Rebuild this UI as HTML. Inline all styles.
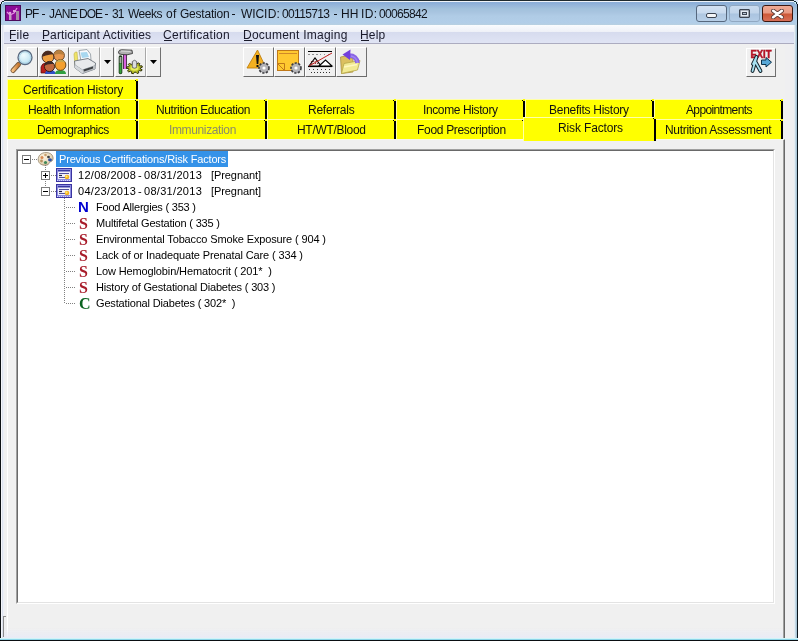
<!DOCTYPE html>
<html><head><meta charset="utf-8">
<style>
*{margin:0;padding:0;box-sizing:border-box}
html,body{width:798px;height:641px;overflow:hidden;background:#f0f0f0;font-family:"Liberation Sans",sans-serif}
.a{will-change:transform}
.a{position:absolute}
#title{left:0;top:0;width:798px;height:25px;background:linear-gradient(#88acd6 0px,#8cafd8 3px,#98b8da 6px,#a2c2dc 9px,#a8c4e0 12px,#b0cce6 16px,#b2cee8 23px,#b8d0e0 25px)}
.tt2{top:7px;font-size:12px;color:#10141c;white-space:nowrap}
#menu{left:0;top:25px;width:798px;height:19px;background:linear-gradient(#fafcfe 0px,#eef0f7 7px,#d6dbee 7px,#e0e4f4 18px);border-bottom:1px solid #acacc0}
.mi{top:28px;font-size:12px;color:#1a1a2a;white-space:nowrap}
.ul{top:40px;height:1px;background:#1a1a2a}
.tb{background:#f0f0f0;border-top:1px solid #fff;border-left:1px solid #fff;border-right:1px solid #707070;border-bottom:1px solid #6a6a6a}
.tab{background:#ffff00;font-size:12px;color:#111;text-align:center;white-space:nowrap;letter-spacing:-0.3px}
.tab .r{position:absolute;right:0;top:2px;bottom:0;width:2px;background:#000}
.tab .r:before{content:"";position:absolute;left:-1px;top:-1px;width:1px;height:1px;background:#000}
.tab .l{position:absolute;left:0;top:0;bottom:0;width:1px;background:#ffffa8}
.tab .t{position:absolute;left:0;right:2px;top:0;height:1px;background:#ffffa8}
.tt{font-size:12px;color:#111;white-space:nowrap;line-height:normal}
.tr{font-size:11px;color:#000;white-space:nowrap;letter-spacing:-0.2px}
.ic{font-family:"Liberation Serif",serif;font-weight:bold;font-size:16px;line-height:16px}
</style></head><body>

<!-- window frame -->
<div class="a" style="left:0;top:0;width:798px;height:641px;background:#f0f0f0"></div>
<div class="a" id="title"></div>
<div class="a" style="left:0;top:0;width:798px;height:1px;background:#1e2a2e"></div>
<div class="a" style="left:1px;top:1px;width:796px;height:1px;background:#eef3f8"></div>
<!-- title icon -->
<svg class="a" style="left:5px;top:5px" width="16" height="16" viewBox="0 0 16 16">
<rect x="0.5" y="0.5" width="15" height="15" fill="#8a0a96" stroke="#4a0a5a"/>
<rect x="11" y="6" width="3" height="9" fill="#a88aa8"/>
<circle cx="5" cy="8" r="1.3" fill="#e0a0e0"/>
<path d="M2 7 L5 10 L9 8 L12 3" stroke="#e090e0" stroke-width="1.3" fill="none"/>
<rect x="4" y="10" width="2.5" height="5" fill="#c0a0c0"/>
<rect x="8" y="5" width="3" height="2" fill="#e0a0e0"/>
</svg>
<div class="a tt2" style="left:25.0px;letter-spacing:-1.0px">PF</div>
<div class="a tt2" style="left:48.8px;letter-spacing:-0.6px">JANE</div>
<div class="a tt2" style="left:79.4px;letter-spacing:-1.0px">DOE</div>
<div class="a tt2" style="left:112.1px;letter-spacing:-1.0px">31</div>
<div class="a tt2" style="left:128.3px;letter-spacing:-0.5px">Weeks</div>
<div class="a tt2" style="left:165.5px;letter-spacing:0.4px">of</div>
<div class="a tt2" style="left:180.0px;letter-spacing:-0.225px">Gestation</div>
<div class="a tt2" style="left:240.6px;letter-spacing:-0.1px">WIC</div>
<div class="a tt2" style="left:264.4px;letter-spacing:0.3px">ID:</div>
<div class="a tt2" style="left:282.4px;letter-spacing:-0.657px">00115713</div>
<div class="a tt2" style="left:340.9px;letter-spacing:0.2px">HH</div>
<div class="a tt2" style="left:361.0px;letter-spacing:0.4px">ID:</div>
<div class="a tt2" style="left:378.6px;letter-spacing:-0.686px">00065842</div>
<div class="a" style="left:41.5px;top:14px;width:3.4px;height:1px;background:#10141c"></div>
<div class="a" style="left:105.4px;top:14px;width:3.4px;height:1px;background:#10141c"></div>
<div class="a" style="left:232.4px;top:14px;width:3.4px;height:1px;background:#10141c"></div>
<div class="a" style="left:334.1px;top:14px;width:3.4px;height:1px;background:#10141c"></div>

<!-- caption buttons -->
<div class="a" style="left:696px;top:5px;width:31px;height:17px;border:1px solid #56687e;border-radius:3px;background:linear-gradient(#d4e2f2 0,#c8daee 7px,#aec6e0 8px,#b8d0e8 15px)"></div>
<div class="a" style="left:706px;top:13px;width:11px;height:5px;border:1px solid #3c4450;background:#f4f6f8;border-radius:2px"></div>
<div class="a" style="left:729px;top:5px;width:31px;height:17px;border:1px solid #90a8c2;border-radius:3px;background:linear-gradient(#cadbee 0,#c0d4ea 7px,#aac4e0 8px,#b4cce6 15px)"></div>
<div class="a" style="left:739px;top:9px;width:11px;height:9px;border:1px solid #3c4450;border-radius:1px;background:#e4eaf2;box-shadow:inset 0 0 0 0.6px #6c7480"></div>
<div class="a" style="left:742px;top:12px;width:5px;height:3px;border:1px solid #3c4450;background:#b8c4d4"></div>
<div class="a" style="left:762px;top:5px;width:31px;height:17px;border:1px solid #3c1810;border-radius:3px;background:linear-gradient(#eeaa94 0,#e89a84 7px,#cc5838 8px,#d87058 15px)"></div>
<svg class="a" style="left:771px;top:9px" width="13" height="10" viewBox="0 0 13 10"><path d="M2.2 1.8 L10.8 8.2 M10.8 1.8 L2.2 8.2" stroke="#5a3a36" stroke-width="4.2" stroke-linecap="round"/><path d="M2.2 1.8 L10.8 8.2 M10.8 1.8 L2.2 8.2" stroke="#fff" stroke-width="2.6" stroke-linecap="round"/></svg>

<!-- menu -->
<div class="a" id="menu"></div>
<div class="a mi" style="left:9px;letter-spacing:0.267px">File</div>
<div class="a mi" style="left:41.6px;letter-spacing:0.114px">Participant Activities</div>
<div class="a mi" style="left:163px;letter-spacing:0.283px">Certification</div>
<div class="a mi" style="left:242.8px;letter-spacing:0.24px">Document Imaging</div>
<div class="a mi" style="left:359.9px;letter-spacing:0.2px">Help</div>
<div class="a ul" style="left:10px;width:6px"></div>
<div class="a ul" style="left:42px;width:7px"></div>
<div class="a ul" style="left:164px;width:8px"></div>
<div class="a ul" style="left:244px;width:8px"></div>
<div class="a ul" style="left:361px;width:8px"></div>

<!-- client background -->
<div class="a" style="left:2px;top:44px;width:795px;height:594px;background:#f0f0f0"></div>

<!-- toolbar buttons -->
<div class="a tb" style="left:7px;top:47px;width:31px;height:30px"></div>
<div class="a tb" style="left:38px;top:47px;width:31px;height:30px"></div>
<div class="a tb" style="left:69px;top:47px;width:31px;height:30px;border-right-color:#a8a8a8"></div>
<div class="a tb" style="left:100px;top:47px;width:14px;height:30px"></div>
<div class="a tb" style="left:115px;top:47px;width:31px;height:30px;border-right-color:#a8a8a8"></div>
<div class="a tb" style="left:146px;top:47px;width:15px;height:30px"></div>
<div class="a tb" style="left:243px;top:47px;width:31px;height:30px"></div>
<div class="a tb" style="left:274px;top:47px;width:31px;height:30px"></div>
<div class="a tb" style="left:305px;top:47px;width:31px;height:30px"></div>
<div class="a tb" style="left:336px;top:47px;width:31px;height:30px"></div>
<div class="a tb" style="left:746px;top:48px;width:30px;height:29px"></div>


<!-- toolbar icons -->
<svg class="a" style="left:7px;top:46px" width="31" height="30" viewBox="0 0 31 30">
<defs><linearGradient id="hg" x1="0" y1="0" x2="1" y2="0"><stop offset="0" stop-color="#f8c080"/><stop offset="1" stop-color="#c87830"/></linearGradient>
<radialGradient id="lg" cx="0.4" cy="0.35" r="0.7"><stop offset="0" stop-color="#f0fcff"/><stop offset="1" stop-color="#b8e0f0"/></radialGradient></defs>
<path d="M6 24.5 L11.5 18.5" stroke="#7a5a3a" stroke-width="5" stroke-linecap="round"/>
<path d="M6 24.5 L11.5 18.5" stroke="url(#hg)" stroke-width="3.2" stroke-linecap="round"/>
<circle cx="18" cy="11.5" r="7" fill="url(#lg)" stroke="#5a6a80" stroke-width="1.3"/>
<circle cx="18" cy="11.5" r="5.6" fill="none" stroke="#a8d0e4" stroke-width="0.8"/>
</svg>
<svg class="a" style="left:38px;top:46px" width="31" height="30" viewBox="0 0 31 30">
<defs>
<clipPath id="h1"><path d="M0 0 H31 V9.5 Q10 6 0 13Z"/></clipPath>
<clipPath id="h2"><path d="M0 0 H31 V11 Q21 5.5 14 10Z"/></clipPath>
<clipPath id="h3"><path d="M0 0 H31 V19 Q11 15.5 4 21Z"/></clipPath>
<clipPath id="h4"><path d="M0 0 H31 V17.5 Q22 14 16 18Z"/></clipPath>
</defs>
<path d="M3 27 L3 21 Q4 17 8 17 L10 27Z" fill="#b81c1c" stroke="#500c0c" stroke-width="0.7"/>
<circle cx="21" cy="9.5" r="5.4" fill="#e89850" stroke="#5a3a20" stroke-width="0.9"/>
<circle cx="21" cy="9.5" r="5.4" fill="#b88040" clip-path="url(#h2)"/>
<circle cx="10" cy="11" r="5.9" fill="#f0a040" stroke="#3a2018" stroke-width="0.9"/>
<circle cx="10" cy="11" r="5.9" fill="#4a2a20" clip-path="url(#h1)"/>
<path d="M7 28 Q7 24 12 24 Q17 24 18 28Z" fill="#3050c8"/>
<path d="M17 28 Q17 24 22.5 24 Q28 24 28 28Z" fill="#30a040"/>
<circle cx="11.5" cy="20.5" r="5.1" fill="#c06840" stroke="#301810" stroke-width="0.9"/>
<circle cx="11.5" cy="20.5" r="5.1" fill="#3c2828" clip-path="url(#h3)"/>
<circle cx="22.5" cy="19" r="5.4" fill="#f4a030" stroke="#5a3a10" stroke-width="0.9"/>
<circle cx="22.5" cy="19" r="5.4" fill="#c8a850" clip-path="url(#h4)"/>
</svg>
<svg class="a" style="left:69px;top:46px" width="31" height="30" viewBox="0 0 31 30">
<path d="M10 4.5 L18 3.5 L21.5 8 L22 14 L12 15 Z" fill="#f8fafc" stroke="#8c949c" stroke-width="0.8"/>
<path d="M11.5 6.5 L18 6 L20 11 L13 12Z" fill="#a8d8f0"/>
<path d="M5 8 Q5.5 5.5 8 6 L9 18 L6 19Z" fill="#f0e468" stroke="#c0b048" stroke-width="0.6"/>
<path d="M5.5 15 L19 12.5 L26.5 17 L26 23 L13.5 27.5 L6 22Z" fill="#e8eaec" stroke="#6c747c" stroke-width="0.9"/>
<path d="M6 19 L13.5 24 L26.5 19.5" stroke="#8c949c" stroke-width="0.9" fill="none"/>
<path d="M13.5 24 L13.5 27.5 L26 23 L26.5 19.5Z" fill="#b8bcc2"/>
<path d="M6 19 L13.5 24 L13.5 27.5 L6 22Z" fill="#d4d8dc"/>
<path d="M14.5 23.5 L24 20.5 L24 22.5 L15 25.5Z" fill="#3c4044"/>
</svg>
<svg class="a" style="left:115px;top:46px" width="31" height="30" viewBox="0 0 31 30">
<path d="M5.5 11 L5.5 26.5" stroke="#1c3a1c" stroke-width="3.6" stroke-linecap="round"/>
<path d="M5.5 18 L5.5 26.5" stroke="#38a038" stroke-width="2" stroke-linecap="round"/>
<path d="M5.5 11 L5.5 17" stroke="#a8a8a8" stroke-width="1.8"/>
<path d="M10 8 L10 23" stroke="#402040" stroke-width="3.8"/>
<path d="M10 8 L10 23" stroke="#d860e0" stroke-width="2"/>
<path d="M3.5 6 Q4 3.5 7 3.8 L17 4.2 L17.5 7.5 L12 8.8 L7 8.5 L4 7.8Z" fill="#b0b0b0" stroke="#383838" stroke-width="0.9"/>
<path d="M6 5 L15.5 5.3" stroke="#e8e8e8" stroke-width="0.9"/>
<path d="M25.38 22.86 L27.13 23.73 L26.32 25.01 L24.26 24.63 L23.24 25.38 L23.80 26.86 L22.04 27.46 L20.80 26.22 L19.35 26.32 L18.46 27.71 L16.57 27.36 L16.73 25.83 L15.53 25.24 L13.61 25.89 L12.47 24.75 L13.96 23.66 L13.57 22.64 L11.51 22.26 L11.66 20.86 L13.78 20.70 L14.38 19.75 L13.15 18.50 L14.52 17.49 L16.27 18.36 L17.59 17.90 L17.76 16.38 L19.70 16.24 L20.28 17.72 L21.70 17.98 L23.19 16.89 L24.80 17.68 L23.92 19.08 L24.77 19.94 L26.89 19.79 L27.41 21.14 L25.49 21.81Z" fill="#b8c028" stroke="#2c2c08" stroke-width="1"/>
<ellipse cx="19.5" cy="22" rx="4" ry="2.8" fill="#e8ee60"/>
<path d="M17.3 21.5 L17.3 15.5 Q19.5 13 21.7 15.5 L21.7 21.5 Q19.5 23 17.3 21.5Z" fill="#dcdce0" stroke="#505058" stroke-width="0.8"/>
</svg>
<svg class="a" style="left:104px;top:60px" width="7" height="4" viewBox="0 0 7 4"><path d="M0 0H7L3.5 4Z" fill="#000"/></svg>
<svg class="a" style="left:150px;top:60px" width="7" height="4" viewBox="0 0 7 4"><path d="M0 0H7L3.5 4Z" fill="#000"/></svg>
<svg class="a" style="left:243px;top:46px" width="31" height="30" viewBox="0 0 31 30">
<path d="M14.5 4 L23 22 L4 22Z" fill="#f4b020" stroke="#c08010" stroke-width="0.9" stroke-linejoin="round"/>
<path d="M13 9 L16 9 L15.3 18 L13.7 18Z" fill="#101010"/><rect x="13.5" y="19" width="2" height="2" fill="#101010"/>
<g transform="translate(21 22)"><circle r="5" fill="#a8a8ac" stroke="#3c3c40" stroke-width="1.6" stroke-dasharray="2.2 1.4"/><circle r="3.8" fill="#b4b4b8"/><circle r="1.6" fill="#fff"/></g>
</svg>
<svg class="a" style="left:274px;top:46px" width="31" height="30" viewBox="0 0 31 30">
<rect x="3.5" y="4.5" width="21" height="20" fill="#ffc830" stroke="#c07818" stroke-width="1"/>
<path d="M5 7.5 H23" stroke="#d08828" stroke-width="1"/>
<path d="M3.5 17.5 H10.5 V24.5" fill="none" stroke="#c07818" stroke-width="1"/><path d="M4 18 L10 24" stroke="#c07818" stroke-width="1"/>
<g transform="translate(22 22)"><circle r="5" fill="#a8a8ac" stroke="#3c3c40" stroke-width="1.6" stroke-dasharray="2.2 1.4"/><circle r="3.8" fill="#b4b4b8"/><circle r="1.6" fill="#fff"/></g>
</svg>
<svg class="a" style="left:305px;top:46px" width="31" height="30" viewBox="0 0 31 30">
<path d="M3 5.5 H27" stroke="#000" stroke-width="1"/>
<path d="M3.5 8.5 H14" stroke="#303030" stroke-width="1" stroke-dasharray="1 3"/>
<path d="M15 8.5 H27" stroke="#909090" stroke-width="1" stroke-dasharray="1 3"/>
<path d="M3 20.5 H27" stroke="#000" stroke-width="1.2"/>
<path d="M4 20 L10 12 L16 20Z" fill="#f4e8e8" stroke="#000" stroke-width="1.1"/>
<path d="M14 20 L20.5 14 L27 20Z" fill="#fff" stroke="#000" stroke-width="1.1"/>
<path d="M5.5 17.5 L13 17.5 M6 15.5 L12 15.5" stroke="#600000" stroke-width="0.8" stroke-dasharray="1 1.2"/>
<path d="M4 20 L27 7" stroke="#c02020" stroke-width="1"/>
<path d="M4 23.5 H27" stroke="#404040" stroke-width="1" stroke-dasharray="1 3"/>
<path d="M6 26.5 H26" stroke="#303030" stroke-width="1" stroke-dasharray="1 2"/>
</svg>
<svg class="a" style="left:336px;top:46px" width="31" height="30" viewBox="0 0 31 30">
<path d="M4.5 11 L10 10 L12 12 L17 12 L17 26 L5.5 27.5Z" fill="#dcc060" stroke="#a89040" stroke-width="0.8"/>
<path d="M5.5 27.5 L8 17.5 L24 14.5 L21.5 24Z" fill="#f2ea94" stroke="#b8a848" stroke-width="0.8"/>
<path d="M8 21 L21 18.5" stroke="#fff8c0" stroke-width="1.5"/>
<path d="M21.5 17 Q20.5 9 12 9.5" stroke="#8a64e4" stroke-width="4.6" fill="none"/>
<path d="M21.5 17 Q20.5 11 15 10" stroke="#a088f0" stroke-width="1.5" fill="none"/>
<path d="M6.5 8.5 L14.5 3.5 L14 14Z" fill="#7440dc"/>
</svg>
<svg class="a" style="left:746px;top:48px" width="30" height="29" viewBox="0 0 30 29">
<text x="15" y="10.3" font-family="Liberation Sans" font-weight="bold" font-size="10.5" fill="#c01428" stroke="#a01020" stroke-width="0.5" text-anchor="middle" textLength="21" lengthAdjust="spacingAndGlyphs">EXIT</text>
<path d="M15.5 12 L20 12 L20 9.5 L25.5 14.2 L20 19 L20 16.5 L15.5 16.5Z" fill="#58a8d8" stroke="#0c3048" stroke-width="1"/>
<path d="M10.5 9 L7 16 M10.5 9 L6.5 23 M9.5 14 L14.5 23" stroke="#10202a" stroke-width="3.8" fill="none" stroke-linecap="round" stroke-linejoin="round"/>
<path d="M10.5 9 L7 16 M10.5 9 L6.5 23 M9.5 14 L14.5 23" stroke="#a8e0f0" stroke-width="1.8" fill="none" stroke-linecap="round" stroke-linejoin="round"/>
</svg>

<!-- tabs container -->
<div id="tabs">
<div class="a tab" style="left:7px;top:79px;width:131px;height:20px"><div class="l"></div><div class="t"></div><div class="r"></div></div>
<div class="a tab" style="left:7px;top:99px;width:131px;height:20px"><div class="l"></div><div class="t"></div><div class="r"></div></div>
<div class="a tab" style="left:138px;top:99px;width:129px;height:20px"><div class="l"></div><div class="t"></div><div class="r"></div></div>
<div class="a tab" style="left:267px;top:99px;width:129px;height:20px"><div class="l"></div><div class="t"></div><div class="r"></div></div>
<div class="a tab" style="left:396px;top:99px;width:129px;height:20px"><div class="l"></div><div class="t"></div><div class="r"></div></div>
<div class="a tab" style="left:525px;top:99px;width:129px;height:20px"><div class="l"></div><div class="t"></div><div class="r"></div></div>
<div class="a tab" style="left:654px;top:99px;width:129px;height:20px"><div class="l"></div><div class="t"></div><div class="r"></div></div>
<div class="a tab" style="left:7px;top:119px;width:131px;height:20px"><div class="l"></div><div class="t"></div><div class="r"></div></div>
<div class="a tab" style="left:138px;top:119px;width:129px;height:20px"><div class="l"></div><div class="t"></div><div class="r"></div></div>
<div class="a tab" style="left:267px;top:119px;width:129px;height:20px"><div class="l"></div><div class="t"></div><div class="r"></div></div>
<div class="a tab" style="left:396px;top:119px;width:129px;height:20px"><div class="l"></div><div class="t"></div><div class="r"></div></div>
<div class="a tab" style="left:654px;top:119px;width:129px;height:20px"><div class="l"></div><div class="t"></div><div class="r"></div></div>
<div class="a tt" style="left:23.2px;top:83px;letter-spacing:-0.19px">Certification History</div>
<div class="a tt" style="left:28.0px;top:103px;letter-spacing:-0.353px">Health Information</div>
<div class="a tt" style="left:156.0px;top:103px;letter-spacing:-0.389px">Nutrition Education</div>
<div class="a tt" style="left:308.0px;top:103px;letter-spacing:-0.25px">Referrals</div>
<div class="a tt" style="left:423.0px;top:103px;letter-spacing:-0.385px">Income History</div>
<div class="a tt" style="left:549.0px;top:103px;letter-spacing:-0.267px">Benefits History</div>
<div class="a tt" style="left:686.0px;top:103px;letter-spacing:-0.636px">Appointments</div>
<div class="a tt" style="left:37.0px;top:123px;letter-spacing:-0.455px">Demographics</div>
<div class="a tt" style="left:169.0px;top:123px;letter-spacing:-0.364px;color:#8c8c6a">Immunization</div>
<div class="a tt" style="left:297.0px;top:123px;letter-spacing:-0.3px">HT/WT/Blood</div>
<div class="a tt" style="left:416.5px;top:123px;letter-spacing:-0.312px">Food Prescription</div>
<div class="a tt" style="left:665.0px;top:123px;letter-spacing:-0.316px">Nutrition Assessment</div>
</div>

<!-- tab panel -->
<div class="a" style="left:7px;top:139px;width:778px;height:499px;background:#f0f0f0;border-left:1px solid #fff;border-top:1px solid #fafae0;border-right:1px solid #696969"></div>
<div class="a" style="left:783px;top:140px;width:1px;height:498px;background:#a0a0a0"></div>

<div class="a tab" style="left:523px;top:117px;width:133px;height:24px"><div class="l"></div><div class="t"></div><div class="r"></div></div>
<div class="a tt" style="left:558.0px;top:121px;letter-spacing:-0.145px">Risk Factors</div>

<!-- tree panel -->
<div class="a" style="left:16px;top:149px;width:759px;height:455px;background:#fff;border-left:1px solid #a0a0a0;border-top:1px solid #a0a0a0;border-right:1px solid #fff;border-bottom:1px solid #fff"></div>
<div class="a" style="left:17px;top:150px;width:757px;height:453px;border-left:1px solid #696969;border-top:1px solid #696969;border-right:1px solid #e3e3e3;border-bottom:1px solid #e3e3e3"></div>

<div id="tree">
<div class="a" style="left:22px;top:155px;width:9px;height:9px;border:1px solid #7c7c7c;background:#fff"></div><div class="a" style="left:24px;top:159px;width:5px;height:1px;background:#000"></div>
<div class="a" style="left:32px;top:159px;width:5px;height:1px;background:repeating-linear-gradient(90deg,#808080 0 1px,transparent 1px 2px)"></div>
<svg class="a" style="left:37px;top:151px" width="17" height="16" viewBox="0 0 17 16"><defs><radialGradient id="pg" cx="0.4" cy="0.35" r="0.75"><stop offset="0" stop-color="#fcf4e4"/><stop offset="0.7" stop-color="#e4d4b4"/><stop offset="1" stop-color="#a89070"/></radialGradient></defs><path d="M9 1.5 C4 1.5 0.8 5 1.2 9 C1.6 13 5.5 14.8 9.5 14.2 C12.5 13.8 11.5 11.5 13 11 C15.5 10.5 16.5 8.5 16 6 C15.3 3 12.5 1.5 9 1.5Z" fill="url(#pg)" stroke="#8c7c64" stroke-width="0.7"/><ellipse cx="11.5" cy="6" rx="1.4" ry="1.2" fill="#404040"/><circle cx="5" cy="6.5" r="1.5" fill="#d88850"/><circle cx="8.5" cy="4" r="1.3" fill="#c8a070"/><circle cx="4.5" cy="10" r="1.4" fill="#b89060"/><circle cx="8.5" cy="11.5" r="1.6" fill="#408858"/><ellipse cx="13" cy="8.8" rx="2" ry="1.6" fill="#3050a0"/></svg>
<div class="a" style="left:56px;top:151px;width:172px;height:16px;background:#3492e8"></div>
<div class="a tr" style="left:59px;top:153px;color:#fff;letter-spacing:-0.18px">Previous Certifications/Risk Factors</div>
<div class="a" style="left:45px;top:165px;width:1px;height:27px;background:repeating-linear-gradient(180deg,#808080 0 1px,transparent 1px 2px)"></div>
<div class="a" style="left:41px;top:171px;width:9px;height:9px;border:1px solid #7c7c7c;background:#fff"></div><div class="a" style="left:43px;top:175px;width:5px;height:1px;background:#000"></div><div class="a" style="left:45px;top:173px;width:1px;height:5px;background:#000"></div>
<div class="a" style="left:51px;top:175px;width:5px;height:1px;background:repeating-linear-gradient(90deg,#808080 0 1px,transparent 1px 2px)"></div>
<svg class="a" style="left:56px;top:168px" width="16" height="14" viewBox="0 0 16 14"><rect x="0" y="0" width="16" height="14" fill="#3a34a0"/><rect x="1" y="1" width="14" height="12" fill="#8c8ce0"/><rect x="2" y="2" width="12" height="1.6" fill="#3838a0"/><rect x="2" y="3.6" width="12" height="7.4" fill="#f0f0fc"/><path d="M3 5.5h10M3 9.5h7" stroke="#50509c" stroke-width="1"/><path d="M3 7.5h3" stroke="#202040" stroke-width="1.2"/><circle cx="11" cy="9" r="2.3" fill="#f4b020"/><circle cx="10.5" cy="8.5" r="1.1" fill="#fff070"/><path d="M1 12.5h14" stroke="#d0d0ff" stroke-dasharray="1 1" stroke-width="1"/></svg>
<div class="a tr" style="left:77.5px;top:169px;letter-spacing:0.3px">12/08/2008</div>
<div class="a tr" style="left:138px;top:169px;letter-spacing:0">-</div>
<div class="a tr" style="left:144px;top:169px;letter-spacing:0.3px">08/31/2013</div>
<div class="a tr" style="left:211px;top:169px;letter-spacing:-0.08px">[Pregnant]</div>
<div class="a" style="left:41px;top:187px;width:9px;height:9px;border:1px solid #7c7c7c;background:#fff"></div><div class="a" style="left:43px;top:191px;width:5px;height:1px;background:#000"></div>
<div class="a" style="left:51px;top:191px;width:5px;height:1px;background:repeating-linear-gradient(90deg,#808080 0 1px,transparent 1px 2px)"></div>
<svg class="a" style="left:56px;top:184px" width="16" height="14" viewBox="0 0 16 14"><rect x="0" y="0" width="16" height="14" fill="#3a34a0"/><rect x="1" y="1" width="14" height="12" fill="#8c8ce0"/><rect x="2" y="2" width="12" height="1.6" fill="#3838a0"/><rect x="2" y="3.6" width="12" height="7.4" fill="#f0f0fc"/><path d="M3 5.5h10M3 9.5h7" stroke="#50509c" stroke-width="1"/><path d="M3 7.5h3" stroke="#202040" stroke-width="1.2"/><circle cx="11" cy="9" r="2.3" fill="#f4b020"/><circle cx="10.5" cy="8.5" r="1.1" fill="#fff070"/><path d="M1 12.5h14" stroke="#d0d0ff" stroke-dasharray="1 1" stroke-width="1"/></svg>
<div class="a tr" style="left:77.5px;top:185px;letter-spacing:0.3px">04/23/2013</div>
<div class="a tr" style="left:138px;top:185px;letter-spacing:0">-</div>
<div class="a tr" style="left:144px;top:185px;letter-spacing:0.3px">08/31/2013</div>
<div class="a tr" style="left:211px;top:185px;letter-spacing:-0.08px">[Pregnant]</div>
<div class="a" style="left:64px;top:198px;width:1px;height:106px;background:repeating-linear-gradient(180deg,#808080 0 1px,transparent 1px 2px)"></div>
<div class="a" style="left:66px;top:207px;width:10px;height:1px;background:repeating-linear-gradient(90deg,#808080 0 1px,transparent 1px 2px)"></div>
<div class="a" style="left:78px;top:199px;font-weight:bold;font-size:15px;line-height:16px;color:#0000d0">N</div>
<div class="a tr" style="left:96.0px;top:201px;letter-spacing:-0.219px">Food Allergies ( 353 )</div>
<div class="a" style="left:66px;top:223px;width:10px;height:1px;background:repeating-linear-gradient(90deg,#808080 0 1px,transparent 1px 2px)"></div>
<div class="a ic" style="left:79px;top:216px;color:#a81c2a">S</div>
<div class="a tr" style="left:96.0px;top:217px;letter-spacing:-0.185px">Multifetal Gestation ( 335 )</div>
<div class="a" style="left:66px;top:239px;width:10px;height:1px;background:repeating-linear-gradient(90deg,#808080 0 1px,transparent 1px 2px)"></div>
<div class="a ic" style="left:79px;top:232px;color:#a81c2a">S</div>
<div class="a tr" style="left:95.8px;top:233px;letter-spacing:-0.135px">Environmental Tobacco Smoke Exposure ( 904 )</div>
<div class="a" style="left:66px;top:255px;width:10px;height:1px;background:repeating-linear-gradient(90deg,#808080 0 1px,transparent 1px 2px)"></div>
<div class="a ic" style="left:79px;top:248px;color:#a81c2a">S</div>
<div class="a tr" style="left:96.0px;top:249px;letter-spacing:-0.124px">Lack of or Inadequate Prenatal Care ( 334 )</div>
<div class="a" style="left:66px;top:271px;width:10px;height:1px;background:repeating-linear-gradient(90deg,#808080 0 1px,transparent 1px 2px)"></div>
<div class="a ic" style="left:79px;top:264px;color:#a81c2a">S</div>
<div class="a tr" style="left:96.0px;top:265px;letter-spacing:-0.128px">Low Hemoglobin/Hematocrit ( 201*&nbsp; )</div>
<div class="a" style="left:66px;top:287px;width:10px;height:1px;background:repeating-linear-gradient(90deg,#808080 0 1px,transparent 1px 2px)"></div>
<div class="a ic" style="left:79px;top:280px;color:#a81c2a">S</div>
<div class="a tr" style="left:96.0px;top:281px;letter-spacing:-0.184px">History of Gestational Diabetes ( 303 )</div>
<div class="a" style="left:66px;top:303px;width:10px;height:1px;background:repeating-linear-gradient(90deg,#808080 0 1px,transparent 1px 2px)"></div>
<div class="a ic" style="left:79px;top:296px;color:#0a6420">C</div>
<div class="a tr" style="left:96.0px;top:297px;letter-spacing:-0.165px">Gestational Diabetes ( 302*&nbsp; )</div>
</div>


<!-- frame edges -->
<div class="a" style="left:0;top:25px;width:4px;height:616px;background:linear-gradient(90deg,#0c1014 0 1px,#f4f6fa 1px 2px,#dde2ee 2px 3px,#eceff6 3px 4px)"></div>
<div class="a" style="left:0;top:0;width:1px;height:25px;background:#0c1014"></div>
<div class="a" style="left:794px;top:25px;width:4px;height:616px;background:linear-gradient(90deg,#e4ecf2 0 1px,#c4d8e4 1px 2px,#a8c4d6 2px 3px,#0a141c 3px 4px)"></div>
<div class="a" style="left:797px;top:0;width:1px;height:25px;background:#0a141c"></div>
<div class="a" style="left:785px;top:44px;width:9px;height:594px;background:#efeff1"></div>
<div class="a" style="left:3px;top:616px;width:1px;height:21px;background:#8c8c8c"></div><div class="a" style="left:3px;top:616px;width:3px;height:1px;background:#8c8c8c"></div>
<div class="a" style="left:4px;top:628px;width:779px;height:10px;background:linear-gradient(rgba(240,240,240,0),rgba(232,234,246,0.9))"></div>
<div class="a" style="left:0;top:638px;width:798px;height:3px;background:linear-gradient(#d2f4f8 0 1px,#8cd4e8 1px 2px,#0a0e12 2px 3px)"></div>

<!-- corners -->
<div class="a" style="left:0;top:0;width:4px;height:1px;background:#f0e4f4"></div>
<div class="a" style="left:0;top:1px;width:2px;height:1px;background:#f0e4f4"></div>
<div class="a" style="left:0;top:2px;width:1px;height:2px;background:#f0e4f4"></div>
<div class="a" style="left:2px;top:1px;width:2px;height:1px;background:#182a30"></div>
<div class="a" style="left:1px;top:2px;width:1px;height:2px;background:#182a30"></div>
<div class="a" style="left:2px;top:2px;width:2px;height:1px;background:#c8eef4"></div>
<div class="a" style="left:2px;top:3px;width:1px;height:1px;background:#c8eef4"></div>
<div class="a" style="left:794px;top:0;width:4px;height:1px;background:#dce8f8"></div>
<div class="a" style="left:796px;top:1px;width:2px;height:1px;background:#dce8f8"></div>
<div class="a" style="left:797px;top:2px;width:1px;height:2px;background:#dce8f8"></div>
<div class="a" style="left:794px;top:1px;width:2px;height:1px;background:#102830"></div>
<div class="a" style="left:796px;top:2px;width:1px;height:2px;background:#102830"></div>
<div class="a" style="left:794px;top:2px;width:2px;height:1px;background:#c8eef4"></div>
<div class="a" style="left:795px;top:3px;width:1px;height:1px;background:#c8eef4"></div>
</body></html>
